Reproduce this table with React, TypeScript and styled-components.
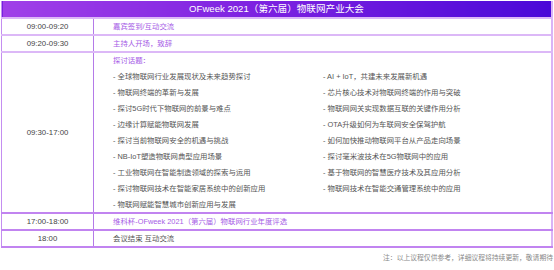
import React from 'react'
import styled, { createGlobalStyle } from 'styled-components'

const GlobalStyle = createGlobalStyle`
  body {
    margin: 0;
    background: #ffffff;
    font-family: "Liberation Sans", "Noto Sans CJK SC", sans-serif;
  }
`

const Page = styled.div`
  width: 554px;
  padding: 1px 1px 0 1px;
  box-sizing: border-box;
`

const Table = styled.table`
  width: 552px;
  border-collapse: collapse;
  table-layout: fixed;
  border-right: 2px solid #d9b3f6;
  border-left: 1px solid #c48ef0;
`

const TimeCol = styled.col`
  width: 92px;
`

const HeadCell = styled.th`
  height: 16px;
  padding: 0;
  background: linear-gradient(to right, #a040e8, #7a20e0 50%, #4a08d8);
  color: #ffffff;
  font-size: 9.6px;
  font-weight: normal;
  text-align: center;
  line-height: 16px;
`

const Row = styled.tr<{ $strong?: boolean; $last?: boolean }>`
  border-top: 2px solid ${p => (p.$strong ? '#c184f0' : '#dcb8f7')};
  border-bottom: ${p => (p.$last ? '2px solid #c184f0' : 'none')};
`

const TimeCell = styled.td<{ $tall?: boolean }>`
  height: ${p => (p.$tall ? '159px' : '15px')};
  padding: 0;
  text-align: center;
  vertical-align: middle;
  font-size: 7.8px;
  line-height: 15px;
  color: #444444;
  border-right: 1px solid #b47ae8;
`

const InfoCell = styled.td<{ $accent?: boolean }>`
  padding: 0 0 0 19px;
  vertical-align: middle;
  font-size: 7.4px;
  line-height: 15px;
  color: ${p => (p.$accent ? '#a65ce6' : '#555555')};
`

const TopicBlock = styled.div`
  line-height: 16px;
  height: 159px;
`

const TopicTitle = styled.div`
  color: #a65ce6;
`

const TopicGrid = styled.div`
  display: grid;
  grid-template-columns: 210px 1fr;
`

const TopicList = styled.div`
  display: flex;
  flex-direction: column;
`

const Topic = styled.div`
  color: #555555;
  white-space: nowrap;
`

const Note = styled.div`
  margin-top: 4px;
  text-align: right;
  font-size: 6.8px;
  color: #888888;
`

const leftTopics = [
  '全球物联网行业发展现状及未来趋势探讨',
  '物联网终端的革新与发展',
  '探讨5G时代下物联网的前景与难点',
  '边缘计算赋能物联网发展',
  '探讨当前物联网安全的机遇与挑战',
  'NB-IoT塑造物联网典型应用场景',
  '工业物联网在智能制造领域的探索与运用',
  '探讨物联网技术在智能家居系统中的创新应用',
  '物联网赋能智慧城市创新应用与发展',
]

const rightTopics = [
  'AI + IoT，共建未来发展新机遇',
  '芯片核心技术对物联网终端的作用与突破',
  '物联网网关实现数据互联的关键作用分析',
  'OTA升级如何为车联网安全保驾护航',
  '如何加快推动物联网平台从产品走向场景',
  '探讨毫米波技术在5G物联网中的应用',
  '基于物联网的智慧医疗技术及其应用分析',
  '物联网技术在智能交通管理系统中的应用',
]

function App() {
  return (
    <Page>
      <GlobalStyle />
      <Table>
        <colgroup>
          <TimeCol />
          <col />
        </colgroup>
        <thead>
          <tr>
            <HeadCell colSpan={2}>OFweek 2021（第六届）物联网产业大会</HeadCell>
          </tr>
        </thead>
        <tbody>
          <Row>
            <TimeCell>09:00-09:20</TimeCell>
            <InfoCell $accent>嘉宾签到/互动交流</InfoCell>
          </Row>
          <Row>
            <TimeCell>09:20-09:30</TimeCell>
            <InfoCell $accent>主持人开场，致辞</InfoCell>
          </Row>
          <Row>
            <TimeCell $tall>09:30-17:00</TimeCell>
            <InfoCell>
              <TopicBlock>
                <TopicTitle>探讨话题：</TopicTitle>
                <TopicGrid>
                  <TopicList>
                    {leftTopics.map(t => (
                      <Topic key={t}>- {t}</Topic>
                    ))}
                  </TopicList>
                  <TopicList>
                    {rightTopics.map(t => (
                      <Topic key={t}>- {t}</Topic>
                    ))}
                  </TopicList>
                </TopicGrid>
              </TopicBlock>
            </InfoCell>
          </Row>
          <Row $strong>
            <TimeCell>17:00-18:00</TimeCell>
            <InfoCell $accent>维科杯-OFweek 2021（第六届）物联网行业年度评选</InfoCell>
          </Row>
          <Row $strong $last>
            <TimeCell>18:00</TimeCell>
            <InfoCell>会议结束 互动交流</InfoCell>
          </Row>
        </tbody>
      </Table>
      <Note>注：以上议程仅供参考，详细议程将持续更新，敬请期待</Note>
    </Page>
  )
}

export default App
